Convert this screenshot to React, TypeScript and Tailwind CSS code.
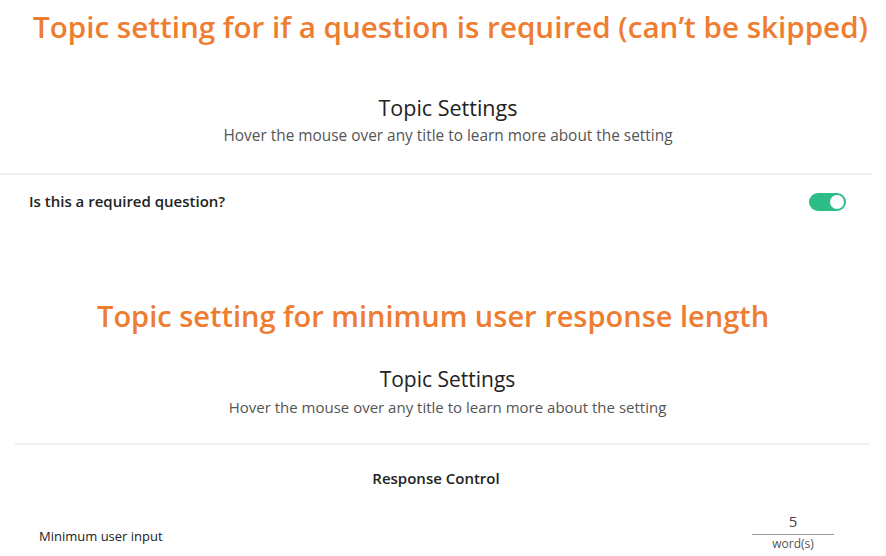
import React from "react";

const Toggle: React.FC<{ on: boolean }> = ({ on }) => (
  <div
    className={`flex h-[18px] w-[37px] items-center rounded-full px-[2px] ${
      on ? "justify-end bg-[#2dbd87]" : "justify-start bg-gray-300"
    }`}
  >
    <div className="h-[14px] w-[14px] rounded-full bg-white" />
  </div>
);

const SettingsHeader: React.FC<{ wide?: boolean }> = ({ wide }) => (
  <div className="flex flex-col items-center">
    <div className={`leading-[24px] text-[#222] ${wide ? "text-[21.5px]" : "text-[21px]"}`}>
      Topic Settings
    </div>
    <div className={`mt-[7px] leading-[18px] text-[#555] ${wide ? "text-[15.4px]" : "text-[15px]"}`}>
      Hover the mouse over any title to learn more about the setting
    </div>
  </div>
);

export default function App() {
  return (
    <div className="flex h-[556px] w-[886px] flex-col overflow-hidden bg-white font-['Open_Sans',sans-serif]">
      {/* Required question */}
      <h1 className="shrink-0 pl-[33px] pt-[8px] text-[29.6px] font-semibold leading-[38px] text-[#ee7d31]">
        Topic setting for if a question is required (can’t be skipped)
      </h1>
      <div className="mt-[50px] shrink-0 pl-[10px]">
        <SettingsHeader wide />
      </div>
      <div className="mt-[28px] h-[2px] w-[872px] shrink-0 bg-[#efefef]" />
      <div className="flex shrink-0 items-center justify-between pl-[29px] pr-[40px] pt-[16px]">
        <span className="text-[15px] font-semibold leading-[21px] text-[#222]">
          Is this a required question?
        </span>
        <Toggle on />
      </div>

      {/* Minimum response length */}
      <h1 className="mt-[85px] shrink-0 pl-[97px] text-[29px] font-semibold leading-[38px] text-[#ee7d31]">
        Topic setting for minimum user response length
      </h1>
      <div className="mt-[32px] shrink-0 pl-[9px]">
        <SettingsHeader />
      </div>
      <div className="ml-[15px] mt-[27px] h-[2px] w-[854px] shrink-0 bg-[#efefef]" />
      <div className="mt-[23px] shrink-0 pr-[14px] text-center text-[15px] font-semibold leading-[20px] text-[#222]">
        Response Control
      </div>
      <div className="mt-[23px] flex shrink-0 items-center justify-between pl-[39px] pr-[52px]">
        <span className="mt-[8px] text-[13px] leading-[20px] text-[#222]">Minimum user input</span>
        <div className="flex w-[82px] flex-col items-center">
          <div className="text-[15px] leading-[20px] text-[#444]">5</div>
          <div className="mt-[3px] h-px w-full bg-[#999]" />
          <div className="mt-px text-[12px] leading-[16px] text-[#555]">word(s)</div>
        </div>
      </div>
    </div>
  );
}
